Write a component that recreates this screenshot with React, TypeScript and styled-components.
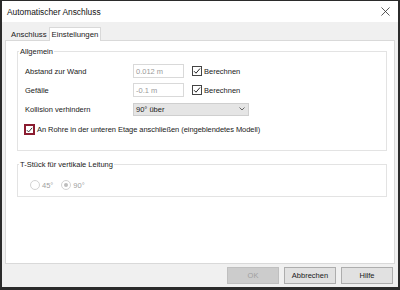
import React from "react";
import styled, { createGlobalStyle } from "styled-components";

const Global = createGlobalStyle`
  html, body { margin: 0; padding: 0; background: #f0f0f0; }
  body { font-family: "Liberation Sans", Arial, sans-serif; }
  * { box-sizing: border-box; }
`;

const Window = styled.div`
  width: 400px;
  height: 290px;
  border: 2px solid #2b2b2b;
  border-top: 1px solid #2b2b2b;
  border-bottom: 3px solid #2b2b2b;
  background: #f0f0f0;
  display: flex;
  flex-direction: column;
  font-size: 7.5px;
  color: #1a1a1a;
`;

const TitleBar = styled.div`
  height: 21px;
  background: #fff;
  display: flex;
  align-items: center;
  justify-content: space-between;
  padding: 0 8px 0 5px;
  font-size: 8.4px;
  color: #111;
`;

const CloseIcon = styled.svg`
  width: 9px;
  height: 9px;
`;

const Body = styled.div`
  flex: 1;
  display: flex;
  flex-direction: column;
  padding: 4px 3px 0 3px;
`;

const TabRow = styled.div`
  display: flex;
  align-items: flex-end;
  height: 14px;
  padding-left: 4px;
`;

const Tab = styled.div<{ $active?: boolean }>`
  height: ${(p) => (p.$active ? "14px" : "12px")};
  padding: 0 ${(p) => (p.$active ? "2px" : "1px")};
  display: flex;
  align-items: center;
  font-size: 7.8px;
  background: ${(p) => (p.$active ? "#fff" : "#f0f0f0")};
  border: 1px solid ${(p) => (p.$active ? "#d9d9d9" : "transparent")};
  border-bottom: none;
  margin-bottom: ${(p) => (p.$active ? "-1px" : "0")};
  position: relative;
  z-index: 1;
`;

const Panel = styled.div`
  height: 224px;
  background: #fff;
  border: 1px solid #d9d9d9;
  padding: 6px 7px 0 11px;
  display: flex;
  flex-direction: column;
  gap: 9px;
`;

const Group = styled.fieldset<{ $h: number }>`
  margin: 0;
  height: ${(p) => p.$h}px;
  border: 1px solid #e3e3e3;
  padding: 8px 7px 0 7px;
  min-width: 0;
`;

const Legend = styled.legend`
  padding: 0 1px;
  margin-left: -6px;
  font-size: 7.5px;
`;

const Rows = styled.div`
  display: grid;
  grid-template-columns: 108px 51px auto;
  grid-auto-rows: 14px;
  row-gap: 5px;
  align-items: center;
`;

const Label = styled.span``;

const Input = styled.div`
  height: 14px;
  border: 1px solid #d9d9d9;
  display: flex;
  align-items: center;
  padding-left: 2px;
  color: #9a9a9a;
`;

const CheckWrap = styled.label`
  display: flex;
  align-items: center;
  gap: 2px;
  margin-left: 8px;
`;

const Box = styled.span<{ $focus?: boolean }>`
  width: ${(p) => (p.$focus ? "11px" : "10px")};
  height: ${(p) => (p.$focus ? "11px" : "10px")};
  border: ${(p) => (p.$focus ? "2px solid #8b1c30" : "1px solid #444")};
  background: #fff;
  display: flex;
  align-items: center;
  justify-content: center;
  flex: none;
`;

const Select = styled.div`
  grid-column: 2 / span 2;
  width: 116px;
  height: 13px;
  background: #e5e5e5;
  border: 1px solid #cfcfcf;
  display: flex;
  align-items: center;
  justify-content: space-between;
  padding: 0 3px 0 2px;
`;

const BigCheck = styled.div`
  display: flex;
  align-items: center;
  gap: 2px;
  margin-top: 8px;
  margin-left: -1px;
  letter-spacing: -0.05px;
`;

const RadioRow = styled.div`
  display: flex;
  align-items: center;
  gap: 8px;
  margin-top: 3px;
  padding-left: 5px;
  color: #a0a0a0;
`;

const RadioItem = styled.div`
  display: flex;
  align-items: center;
  gap: 2px;
`;

const Radio = styled.span<{ $on?: boolean }>`
  width: 10px;
  height: 10px;
  border-radius: 50%;
  border: 1px solid #d3d3d3;
  background: #fff;
  display: flex;
  align-items: center;
  justify-content: center;
  &::after {
    content: "";
    width: 4px;
    height: 4px;
    border-radius: 50%;
    background: ${(p) => (p.$on ? "#bdbdbd" : "transparent")};
  }
`;

const Footer = styled.div`
  flex: 1;
  display: flex;
  justify-content: flex-end;
  align-items: flex-start;
  gap: 5px;
  padding-top: 3px;
  padding-right: 2px;
`;

const Button = styled.div<{ $disabled?: boolean }>`
  width: 52px;
  height: 17px;
  display: flex;
  align-items: center;
  justify-content: center;
  background: ${(p) => (p.$disabled ? "#cccccc" : "#e1e1e1")};
  border: 1px solid ${(p) => (p.$disabled ? "#bfbfbf" : "#adadad")};
  color: ${(p) => (p.$disabled ? "#a0a0a0" : "#1a1a1a")};
`;

const Tick = () => (
  <svg width="8" height="8" viewBox="0 0 8 8">
    <path d="M1 4.2 L3 6.2 L7 1.5" fill="none" stroke="#222" strokeWidth="1" />
  </svg>
);

export default function App() {
  return (
    <>
      <Global />
      <Window>
        <TitleBar>
          <span>Automatischer Anschluss</span>
          <CloseIcon viewBox="0 0 10 10">
            <path d="M0.5 0.5 L9.5 9.5 M9.5 0.5 L0.5 9.5" stroke="#333" strokeWidth="0.9" />
          </CloseIcon>
        </TitleBar>
        <Body>
          <TabRow>
            <Tab>Anschluss</Tab>
            <Tab $active>Einstellungen</Tab>
          </TabRow>
          <Panel>
            <Group $h={104}>
              <Legend>Allgemein</Legend>
              <Rows>
                <Label>Abstand zur Wand</Label>
                <Input>0.012 m</Input>
                <CheckWrap>
                  <Box>
                    <Tick />
                  </Box>
                  Berechnen
                </CheckWrap>
                <Label>Gefälle</Label>
                <Input>-0.1 m</Input>
                <CheckWrap>
                  <Box>
                    <Tick />
                  </Box>
                  Berechnen
                </CheckWrap>
                <Label>Kollision verhindern</Label>
                <Select>
                  <span>90° über</span>
                  <svg width="6" height="4" viewBox="0 0 6 4">
                    <path d="M0.5 0.5 L3 3 L5.5 0.5" fill="none" stroke="#555" strokeWidth="0.9" />
                  </svg>
                </Select>
              </Rows>
              <BigCheck>
                <Box $focus>
                  <Tick />
                </Box>
                An Rohre in der unteren Etage anschließen (eingeblendetes Modell)
              </BigCheck>
            </Group>
            <Group $h={37}>
              <Legend>T-Stück für vertikale Leitung</Legend>
              <RadioRow>
                <RadioItem>
                  <Radio />
                  45°
                </RadioItem>
                <RadioItem>
                  <Radio $on />
                  90°
                </RadioItem>
              </RadioRow>
            </Group>
          </Panel>
          <Footer>
            <Button $disabled>OK</Button>
            <Button>Abbrechen</Button>
            <Button>Hilfe</Button>
          </Footer>
        </Body>
      </Window>
    </>
  );
}
